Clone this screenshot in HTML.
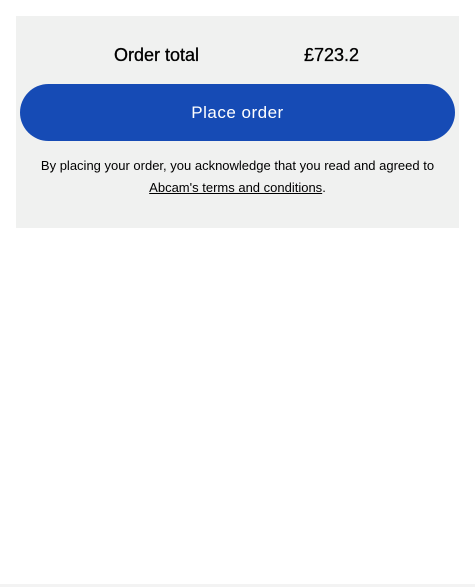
<!DOCTYPE html>
<html><head><style>
body{margin:0;width:475px;height:587px;background:#fff;font-family:"Liberation Sans",sans-serif;position:relative;overflow:hidden}
.p{position:absolute;left:16px;top:16px;width:443px;height:212px;background:#f0f1f0}
.t{position:absolute;top:28px;font-size:18px;color:#000;line-height:22px;-webkit-text-stroke:0.3px #000}
.b{position:absolute;left:4px;top:68px;width:435px;height:57px;border-radius:29px;background:#164bb5;color:#fff;font-size:17px;text-align:center;line-height:57px;letter-spacing:0.5px}
.s{position:absolute;left:0;width:443px;text-align:center;font-size:13px;color:#000;line-height:22px}
a{color:#000;text-decoration:underline}
.f{position:absolute;left:0;top:584px;width:475px;height:3px;background:#f3f3f3}
</style></head><body>
<div class="p">
<div class="t" style="left:98px;">Order total</div>
<div class="t" style="left:288px;">£723.2</div>
<div class="b">Place order</div>
<div class="s" style="top:139px">By placing your order, you acknowledge that you read and agreed to</div>
<div class="s" style="top:161px"><a>Abcam's terms and conditions</a>.</div>
</div>
<div class="f"></div>
</body></html>
